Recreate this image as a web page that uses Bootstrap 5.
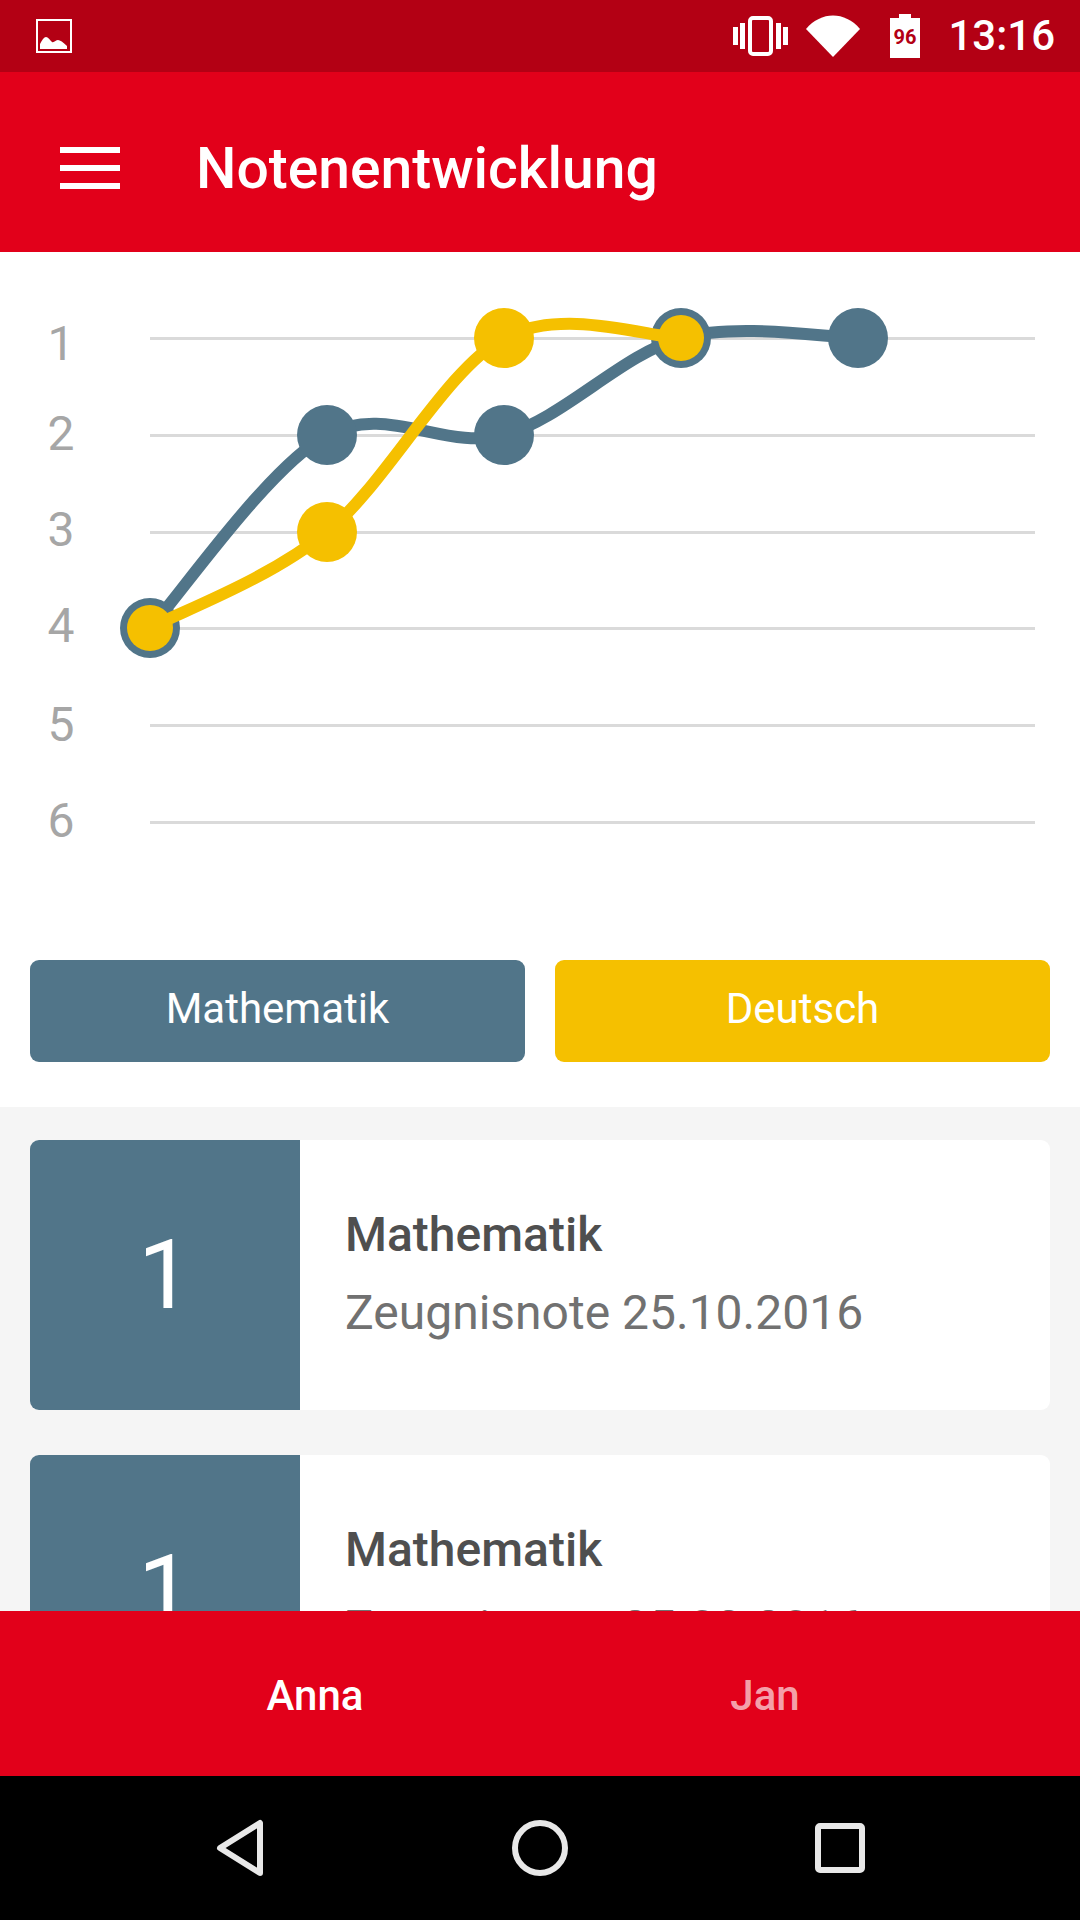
<!DOCTYPE html>
<html lang="en">
<head>
  <meta charset="UTF-8" />
  <meta name="viewport" content="width=device-width, initial-scale=1.0"/>
  <title>Notenentwicklung</title>
  <link href="https://cdn.jsdelivr.net/npm/bootstrap@5.3.0/dist/css/bootstrap.min.css" rel="stylesheet">
  <style>
    body {
      background: #000;
      font-family: Roboto, sans-serif;
    }
    .app-shell {
      width: 1080px;
      height: 1920px;
      overflow: hidden;
    }
    .status-bar {
      height: 72px;
      background: #b30014;
      padding: 0 25px 0 36px;
      color: #fff;
      font-size: 42px;
      font-weight: 500;
    }
    .status-time {
      margin-left: 28px;
      line-height: 72px;
    }
    .gap-vibrate {
      margin-right: 18px;
    }
    .gap-wifi {
      margin-right: 30px;
    }
    .app-bar {
      height: 180px;
      background: #e2001a;
      padding: 12px 0 0 60px;
    }
    .burger {
      width: 60px;
      gap: 12px;
      margin-right: 76px;
    }
    .burger span {
      height: 6px;
      background: #fff;
    }
    .app-title {
      font-size: 57px;
      font-weight: 500;
      color: #fff;
      padding-top: 2px;
    }
    .chart-area {
      height: 855px;
      background: #fff;
    }
    .chart-svg {
      display: block;
    }
    .axis-label {
      font-family: Roboto, sans-serif;
      font-size: 48px;
      font-weight: 400;
      fill: #a6a6a6;
    }
    .btn-row {
      padding: 0 30px;
      gap: 30px;
    }
    .subject-btn {
      height: 102px;
      width: 495px;
      border: 0;
      border-radius: 9px;
      font-size: 42px;
      color: #fff;
      line-height: 1;
      padding: 0 0 5px;
    }
    .subject-btn:hover {
      color: #fff;
    }
    .bg-math {
      background: #517589;
    }
    .bg-math:hover {
      background: #517589;
    }
    .bg-german {
      background: #f5c000;
    }
    .bg-german:hover {
      background: #f5c000;
    }
    .grade-list {
      background: #f5f5f5;
      padding: 33px 30px;
      gap: 45px;
      min-height: 0;
      overflow: hidden;
    }
    .grade-card {
      height: 270px;
      border: 0;
      border-radius: 9px;
      overflow: hidden;
      flex-shrink: 0;
    }
    .grade-num {
      width: 270px;
      color: #fff;
      font-size: 96px;
      font-weight: 400;
      line-height: 1;
    }
    .grade-body {
      padding: 0 0 3px 45px;
    }
    .grade-subject {
      font-size: 48px;
      font-weight: 500;
      color: #4f4f4f;
      line-height: 78px;
    }
    .grade-note {
      font-size: 48px;
      color: #717171;
      line-height: 78px;
    }
    .tab-bar {
      height: 165px;
      background: #e2001a;
      padding: 0 90px;
      flex-shrink: 0;
    }
    .tab-item {
      font-size: 42px;
      font-weight: 500;
      color: #fff;
      padding-top: 3px;
    }
    .tab-off {
      color: rgba(255, 255, 255, 0.65);
    }
    .nav-keys {
      height: 144px;
      background: #000;
      flex-shrink: 0;
    }
  </style>
</head>
<body>
  <div class="app-shell d-flex flex-column">

    <div class="status-bar d-flex align-items-center flex-shrink-0">
      <svg width="36" height="34" viewBox="0 0 36 34">
        <rect x="1" y="1" width="34" height="32" fill="none" stroke="#fff" stroke-width="2"/>
        <path d="M4 30v-5c2-4 4-7 6-7s4 3 6 5c2 1 4-2 6-2s5 2 9 6v3z" fill="#fff"/>
      </svg>
      <div class="ms-auto d-flex align-items-center">
        <svg width="55" height="40" viewBox="0 0 55 40" class="gap-vibrate">
          <rect x="17" y="2" width="21" height="36" rx="3" fill="none" stroke="#fff" stroke-width="4"/>
          <rect x="0" y="11" width="5" height="18" fill="#fff"/>
          <rect x="7" y="7" width="5" height="26" fill="#fff"/>
          <rect x="43" y="7" width="5" height="26" fill="#fff"/>
          <rect x="50" y="11" width="5" height="18" fill="#fff"/>
        </svg>
        <svg width="54" height="42" viewBox="0 0 54 42" class="gap-wifi">
          <path d="M0 14C15 -4 39 -4 54 14L27 42z" fill="#fff"/>
        </svg>
        <svg width="30" height="44" viewBox="0 0 30 44">
          <path d="M9 0h12v4h9v40H0V4h9z" fill="#fff"/>
          <text x="15" y="30" text-anchor="middle" font-family="Roboto, sans-serif" font-size="20" font-weight="700" fill="#b30014">96</text>
        </svg>
        <span class="status-time">13:16</span>
      </div>
    </div>

    <nav class="app-bar d-flex align-items-center flex-shrink-0">
      <div class="burger d-flex flex-column">
        <span></span>
        <span></span>
        <span></span>
      </div>
      <div class="app-title">Notenentwicklung</div>
    </nav>

    <section class="chart-area flex-shrink-0">
      <svg class="chart-svg" width="1080" height="708" viewBox="0 252 1080 708">
        <g stroke="#dadada" stroke-width="3">
          <line x1="150" y1="338.5" x2="1035" y2="338.5"/>
          <line x1="150" y1="435.5" x2="1035" y2="435.5"/>
          <line x1="150" y1="532.5" x2="1035" y2="532.5"/>
          <line x1="150" y1="628.5" x2="1035" y2="628.5"/>
          <line x1="150" y1="725.5" x2="1035" y2="725.5"/>
          <line x1="150" y1="822.5" x2="1035" y2="822.5"/>
        </g>
        <g class="axis-label" text-anchor="middle">
          <text x="61" y="360">1</text>
          <text x="61" y="450">2</text>
          <text x="61" y="546">3</text>
          <text x="61" y="642">4</text>
          <text x="61" y="741">5</text>
          <text x="61" y="837">6</text>
        </g>
        <!-- Mathematik -->
        <path d="M150 628C179.5 596 268 467 327 435C386 403 445 451 504 435C563 419 622 354 681 338C740 322 828 338 858 338" fill="none" stroke="#517589" stroke-width="12"/>
        <g fill="#517589">
          <circle cx="150" cy="628" r="30"/>
          <circle cx="327" cy="435" r="30"/>
          <circle cx="504" cy="435" r="30"/>
          <circle cx="681" cy="338" r="30"/>
          <circle cx="858" cy="338" r="30"/>
        </g>
        <!-- Deutsch -->
        <path d="M150 628C179.5 612 268 580 327 532C386 484 445 370 504 338C563 306 651.5 338 681 338" fill="none" stroke="#f5c000" stroke-width="12"/>
        <g fill="#f5c000">
          <circle cx="150" cy="628" r="23"/>
          <circle cx="327" cy="532" r="30"/>
          <circle cx="504" cy="338" r="30"/>
          <circle cx="681" cy="338" r="23"/>
        </g>
      </svg>
      <div class="btn-row d-flex">
        <button class="btn subject-btn bg-math" type="button">Mathematik</button>
        <button class="btn subject-btn bg-german" type="button">Deutsch</button>
      </div>
    </section>

    <div class="grade-list flex-grow-1 d-flex flex-column">
      <div class="card grade-card flex-row">
        <div class="grade-num bg-math d-flex align-items-center justify-content-center">1</div>
        <div class="grade-body d-flex flex-column justify-content-center">
          <div class="grade-subject">Mathematik</div>
          <div class="grade-note">Zeugnisnote 25.10.2016</div>
        </div>
      </div>
      <div class="card grade-card flex-row">
        <div class="grade-num bg-math d-flex align-items-center justify-content-center">1</div>
        <div class="grade-body d-flex flex-column justify-content-center">
          <div class="grade-subject">Mathematik</div>
          <div class="grade-note">Zeugnisnote 25.03.2016</div>
        </div>
      </div>
    </div>

    <div class="tab-bar d-flex align-items-center">
      <div class="tab-item flex-fill w-50 text-center">Anna</div>
      <div class="tab-item tab-off flex-fill w-50 text-center">Jan</div>
    </div>

    <div class="nav-keys d-flex align-items-center">
      <svg width="1080" height="144" viewBox="0 1776 1080 144" fill="none" stroke="#e8e8e8" stroke-width="6" stroke-linejoin="round">
        <path d="M260 1823V1873L220 1848z"/>
        <circle cx="540" cy="1848" r="25"/>
        <rect x="818" y="1826" width="44" height="44" rx="2"/>
      </svg>
    </div>

  </div>
  <script src="https://cdn.jsdelivr.net/npm/bootstrap@5.3.0/dist/js/bootstrap.bundle.min.js"></script>
</body>
</html>
